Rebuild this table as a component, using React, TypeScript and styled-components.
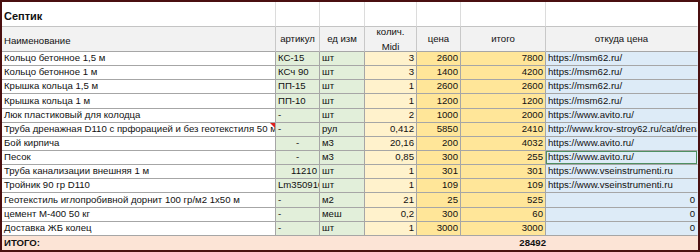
import React from "react";
import styled, { createGlobalStyle, css } from "styled-components";

const GlobalStyle = createGlobalStyle`
  html, body { margin: 0; padding: 0; background: #ffffff; }
`;

const COLS = "274px 44px 45px 52px 44px 85px 1fr";

const C = {
  white: "#ffffff",
  head: "#f2f2f2",
  green: "#e2efda",
  yellow: "#fff2cc",
  gold: "#ffe699",
  blue: "#ddebf7",
  salmon: "#fce4d6",
  line: "#a6a6a6",
  light: "#dcdcdc",
};

const Sheet = styled.div`
  width: 700px;
  height: 252px;
  box-sizing: border-box;
  border: 2px solid #4a0f10;
  overflow: hidden;
  font-family: "Liberation Sans", Arial, sans-serif;
  font-size: 9.6px;
  color: #111;
  background: #fff;
`;

const Row = styled.div<{ $h: number }>`
  display: grid;
  grid-template-columns: ${COLS};
  height: ${(p) => p.$h}px;
`;

type Align = "left" | "right" | "center";

const Cell = styled.div<{
  $bg?: string;
  $align?: Align;
  $valign?: "end" | "center";
  $bold?: boolean;
  $v?: string;
  $hz?: string;
  $sel?: boolean;
  $pr?: number;
  $pb?: number;
}>`
  position: relative;
  box-sizing: border-box;
  background: ${(p) => p.$bg || "#fff"};
  border-right: 1px solid ${(p) => p.$v || C.line};
  border-bottom: 1px solid ${(p) => p.$hz || C.line};
  display: flex;
  align-items: ${(p) => (p.$valign === "center" ? "center" : "flex-end")};
  justify-content: ${(p) =>
    p.$align === "right" ? "flex-end" : p.$align === "center" ? "center" : "flex-start"};
  text-align: ${(p) => p.$align || "left"};
  padding: 0 ${(p) => (p.$pr !== undefined ? p.$pr : 2)}px ${(p) => (p.$pb !== undefined ? p.$pb : 1)}px 2px;
  white-space: nowrap;
  overflow: hidden;
  font-weight: ${(p) => (p.$bold ? 700 : 400)};
  line-height: 12px;
  ${(p) =>
    p.$sel &&
    css`
      box-shadow: inset 0 0 0 1px #4f8f62;
    `}
`;

const Title = styled(Cell)`
  font-size: 11px;
  font-weight: 700;
  padding-bottom: 4px;
  overflow: visible;
`;

const HeadLabel = styled.span`
  display: block;
  text-align: center;
  line-height: 15px;
`;

const Comment = styled.span`
  position: absolute;
  top: 0;
  right: 0;
  width: 0;
  height: 0;
  border-top: 5px solid #e0201c;
  border-left: 5px solid transparent;
`;

const TotalRow = styled.div`
  display: grid;
  grid-template-columns: 461px 85px 1fr;
  height: 14px;
  background: ${C.salmon};
  font-weight: 700;
`;

const TotalCell = styled.div<{ $align?: Align }>`
  display: flex;
  align-items: flex-end;
  justify-content: ${(p) => (p.$align === "right" ? "flex-end" : "flex-start")};
  padding: 0 2px 1px 2px;
  line-height: 12px;
`;

type Item = {
  name: string;
  art: string;
  artAlign: Align;
  unit: string;
  qty: string;
  price: string;
  total: string;
  src: string;
  comment?: boolean;
  sel?: boolean;
};

const items: Item[] = [
  { name: "Кольцо бетонное 1,5 м", art: "КС-15", artAlign: "left", unit: "шт", qty: "3", price: "2600", total: "7800", src: "https://msm62.ru/" },
  { name: "Кольцо бетонное 1 м", art: "КСч 90", artAlign: "left", unit: "шт", qty: "3", price: "1400", total: "4200", src: "https://msm62.ru/" },
  { name: "Крышка кольца 1,5 м", art: "ПП-15", artAlign: "left", unit: "шт", qty: "1", price: "2600", total: "2600", src: "https://msm62.ru/" },
  { name: "Крышка кольца 1 м", art: "ПП-10", artAlign: "left", unit: "шт", qty: "1", price: "1200", total: "1200", src: "https://msm62.ru/" },
  { name: "Люк пластиковый для колодца", art: "-", artAlign: "left", unit: "шт", qty: "2", price: "1000", total: "2000", src: "https://www.avito.ru/" },
  { name: "Труба дренажная D110 с прфорацией и без геотекстиля 50 м", art: "-", artAlign: "left", unit: "рул", qty: "0,412", price: "5850", total: "2410", src: "http://www.krov-stroy62.ru/cat/drenazhnaya-truba", comment: true },
  { name: "Бой кирпича", art: "-", artAlign: "center", unit: "м3", qty: "20,16", price: "200", total: "4032", src: "https://www.avito.ru/" },
  { name: "Песок", art: "-", artAlign: "center", unit: "м3", qty: "0,85", price: "300", total: "255", src: "https://www.avito.ru/", sel: true },
  { name: "Труба канализации внешняя 1 м", art: "11210", artAlign: "right", unit: "шт", qty: "1", price: "301", total: "301", src: "https://www.vseinstrumenti.ru" },
  { name: "Тройник 90 гр D110", art: "Lm350910", artAlign: "left", unit: "шт", qty: "1", price: "109", total: "109", src: "https://www.vseinstrumenti.ru" },
  { name: "Геотекстиль иглопробивной дорнит 100 гр/м2  1х50 м", art: "-", artAlign: "left", unit: "м2", qty: "21", price: "25", total: "525", src: "0" },
  { name: "цемент М-400 50 кг", art: "-", artAlign: "left", unit: "меш", qty: "0,2", price: "300", total: "60", src: "0" },
  { name: "Доставка ЖБ колец", art: "-", artAlign: "left", unit: "шт", qty: "1", price: "3000", total: "3000", src: "0" },
];

const titleCols = 7;

export default function App() {
  return (
    <>
      <GlobalStyle />
      <Sheet>
        <Row $h={25}>
          <Title $v={C.light} $hz="#c4c4c4">Септик</Title>
          {Array.from({ length: titleCols - 1 }).map((_, i) => (
            <Cell key={i} $v={i === titleCols - 2 ? "transparent" : C.light} $hz="#c4c4c4" />
          ))}
        </Row>
        <Row $h={25}>
          <Cell $bg={C.head} $v="#c8c8c8" $hz={C.line} $pb={4}>
            Наименование
          </Cell>
          <Cell $bg={C.head} $v="#c8c8c8" $hz={C.line} $align="center" $valign="center">
            артикул
          </Cell>
          <Cell $bg={C.head} $v="#c8c8c8" $hz={C.line} $align="center" $valign="center">
            ед изм
          </Cell>
          <Cell $bg={C.head} $v="#c8c8c8" $hz={C.line} $align="center" $valign="center">
            <div>
              <HeadLabel>колич.</HeadLabel>
              <HeadLabel>Midi</HeadLabel>
            </div>
          </Cell>
          <Cell $bg={C.head} $v="#c8c8c8" $hz={C.line} $align="center" $valign="center">
            цена
          </Cell>
          <Cell $bg={C.head} $v="#c8c8c8" $hz={C.line} $align="center" $valign="center">
            итого
          </Cell>
          <Cell $bg={C.head} $v="transparent" $hz={C.line} $align="center" $valign="center">
            откуда цена
          </Cell>
        </Row>
        {items.map((it) => (
          <Row $h={14.15} key={it.name}>
            <Cell $bg={C.white}>
              {it.name}
              {it.comment && <Comment />}
            </Cell>
            <Cell $bg={C.green} $align={it.artAlign} $pr={it.artAlign === "left" ? 0 : 2}>
              {it.art}
            </Cell>
            <Cell $bg={C.green}>{it.unit}</Cell>
            <Cell $bg={C.yellow} $align="right">{it.qty}</Cell>
            <Cell $bg={C.gold} $align="right">{it.price}</Cell>
            <Cell $bg={C.gold} $align="right">{it.total}</Cell>
            <Cell $bg={C.blue} $v="transparent" $align={it.src === "0" ? "right" : "left"} $sel={it.sel}>
              {it.src}
            </Cell>
          </Row>
        ))}
        <TotalRow>
          <TotalCell>ИТОГО:</TotalCell>
          <TotalCell $align="right">28492</TotalCell>
          <TotalCell />
        </TotalRow>
      </Sheet>
    </>
  );
}
